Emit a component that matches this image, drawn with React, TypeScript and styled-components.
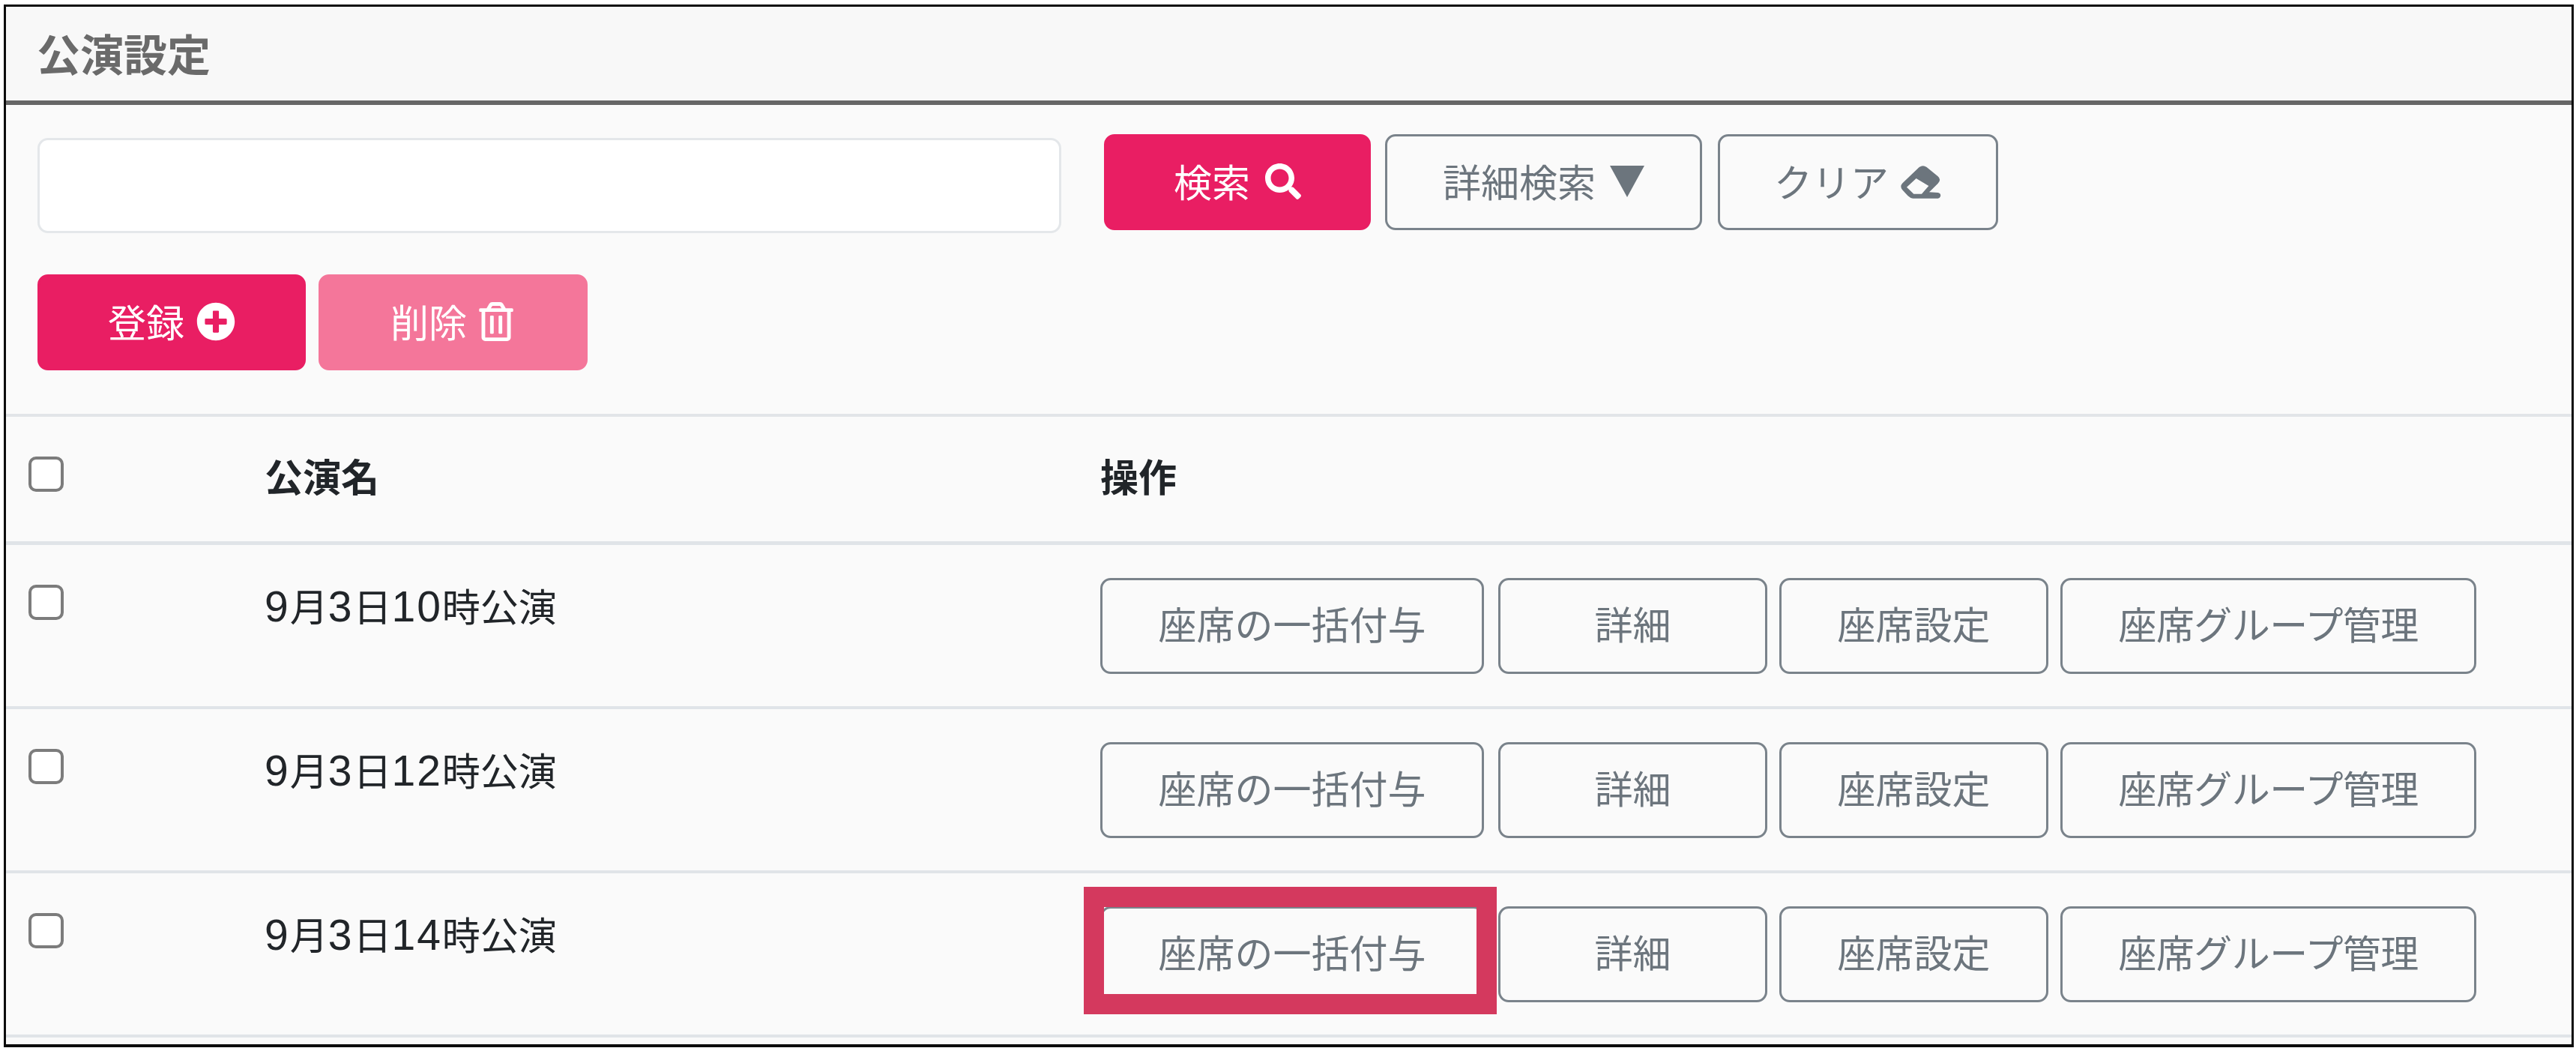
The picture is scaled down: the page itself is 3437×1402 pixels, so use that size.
import React from "react";
import styled, { createGlobalStyle } from "styled-components";
import { FaSearch, FaPlusCircle, FaRegTrashAlt } from "react-icons/fa";

const Global = createGlobalStyle`
  html, body { margin: 0; padding: 0; background: #fff; }
  body { font-family: "Noto Sans CJK JP", "Liberation Sans", sans-serif; }
  * { box-sizing: border-box; }
`;

const Frame = styled.div`
  width: 3429px;
  height: 1391px;
  margin: 6px 0 0 5px;
  border: 3px solid #0c0c0c;
  border-bottom-width: 4px;
  background: #fafafa;
  overflow: hidden;
`;

const Header = styled.header`
  height: 131px;
  padding: 0 0 4px 41px;
  display: flex;
  align-items: center;
  background: #f8f8f8;
  border-bottom: 6px solid #666;
`;

const Title = styled.h1`
  margin: 0;
  font-size: 58px;
  font-weight: 700;
  color: #6a6a6a;
  line-height: 1;
`;

const Toolbar = styled.div`
  padding: 39px 0 0 42px;
  display: flex;
  flex-direction: column;
  gap: 59px;
`;

const ToolRow = styled.div`
  display: flex;
  align-items: flex-start;
  height: 128px;
`;

const SearchInput = styled.input`
  width: 1366px;
  height: 127px;
  margin: 5px 57px 0 0;
  background: #fff;
  border: 3px solid #e4e7ea;
  border-radius: 14px;
`;

const Button = styled.button<{ $variant?: "primary" | "disabled" | "outline"; $gap?: number; $tight?: boolean }>`
  display: inline-flex;
  align-items: center;
  justify-content: center;
  gap: ${(p) => p.$gap ?? 16}px;
  height: 128px;
  min-width: 359px;
  padding: 0 74px 3px;
  font-family: inherit;
  font-size: 51px;
  font-weight: 400;
  line-height: 1;
  letter-spacing: ${(p) => (p.$tight ? "-0.6px" : "0")};
  border-radius: 14px;
  border: 3px solid
    ${(p) => (p.$variant === "primary" ? "#e91e63" : p.$variant === "disabled" ? "#f4769a" : "#7a838b")};
  background: ${(p) => (p.$variant === "primary" ? "#e91e63" : p.$variant === "disabled" ? "#f4769a" : "transparent")};
  color: ${(p) => (p.$variant === "primary" || p.$variant === "disabled" ? "#fff" : "#6c757d")};
  white-space: nowrap;
  flex: none;
`;

const SearchButton = styled(Button)`
  min-width: 356px;
  margin-right: 19px;
`;

const DetailButton = styled(Button)`
  margin-right: 21px;
`;

const ClearButton = styled(Button)`
  padding: 0 72px 3px;
`;

const RegisterButton = styled(Button)`
  min-width: 358px;
  margin-right: 17px;
`;

const ActionButton = styled(Button)`
  padding: 0 74.5px 8px;
`;

const Table = styled.div`
  margin-top: 58px;
  border-top: 4px solid #e2e5e8;
`;

const Row = styled.div<{ $head?: boolean }>`
  display: grid;
  grid-template-columns: 315px 1115px 1fr;
  padding-left: 30px;
  height: ${(p) => (p.$head ? 171 : 219)}px;
  border-bottom: ${(p) => (p.$head ? 5 : 4)}px solid #e0e4e8;
  align-items: start;
`;

const Check = styled.span`
  display: block;
  width: 47px;
  height: 47px;
  margin-top: 53px;
  background: #fff;
  border: 4px solid #7c7c7c;
  border-radius: 10px;
`;

const HeadCell = styled.div`
  font-size: 51px;
  font-weight: 700;
  line-height: 75px;
  margin-top: 41px;
  color: #212529;
`;

const NameCell = styled.div`
  font-size: 51px;
  line-height: 75px;
  margin-top: 43px;
  color: #212529;
`;

const Digits = styled.span`
  font-family: "Liberation Sans", sans-serif;
  font-size: 57px;
  letter-spacing: 2px;
`;

const Actions = styled.div`
  margin-top: 44px;
  display: flex;
  gap: 16px;
`;

const ActionWrap = styled.div`
  position: relative;
  margin-right: 3px;
`;

const Highlight = styled.div`
  position: absolute;
  top: -26px;
  left: -22px;
  right: -17px;
  bottom: -16px;
  border: 27px solid #d4395e;
  pointer-events: none;
`;

const DownTriangle = () => (
  <svg width="46" height="42" viewBox="0 0 46 42" aria-hidden="true">
    <polygon points="0,0 46,0 23,42" fill="#6c757d" />
  </svg>
);

const EraserIcon = () => (
  <svg width="57" height="48" viewBox="50 40 171 144" aria-hidden="true">
    <path
      fillRule="evenodd"
      fill="#6c757d"
      d="M130 55 Q145 45 160 55 L205 92 Q220 105 205 120 L170 155 L205 157 Q218 160 215 172 Q212 180 205 180 L105 180 Q95 180 85 170 L62 145 Q52 132 62 120 Z M118 100 L80 135 L108 162 L140 162 L168 130 Z"
    />
  </svg>
);

const rows = ["9月3日10時公演", "9月3日12時公演", "9月3日14時公演"];

const withDigits = (text: string) =>
  text.split(/(\d+)/).map((part, i) => (/^\d+$/.test(part) ? <Digits key={i}>{part}</Digits> : part));

export default function App() {
  return (
    <>
      <Global />
      <Frame>
        <Header>
          <Title>公演設定</Title>
        </Header>
        <Toolbar>
          <ToolRow>
            <SearchInput />
            <SearchButton $variant="primary" $gap={20}>
              検索 <FaSearch size={48} />
            </SearchButton>
            <DetailButton $variant="outline" $gap={19}>
              詳細検索
              <DownTriangle />
            </DetailButton>
            <ClearButton $variant="outline" $gap={14}>
              クリア <EraserIcon />
            </ClearButton>
          </ToolRow>
          <ToolRow>
            <RegisterButton $variant="primary">
              登録 <FaPlusCircle size={52} />
            </RegisterButton>
            <Button $variant="disabled" $gap={13}>
              削除 <FaRegTrashAlt size={52} />
            </Button>
          </ToolRow>
        </Toolbar>
        <Table>
          <Row $head>
            <Check />
            <HeadCell>公演名</HeadCell>
            <HeadCell>操作</HeadCell>
          </Row>
          {rows.map((name, i) => (
            <Row key={name}>
              <Check />
              <NameCell>{withDigits(name)}</NameCell>
              <Actions>
                <ActionWrap>
                  <ActionButton $variant="outline">座席の一括付与</ActionButton>
                  {i === 2 && <Highlight />}
                </ActionWrap>
                <ActionButton $variant="outline">詳細</ActionButton>
                <ActionButton $variant="outline">座席設定</ActionButton>
                <ActionButton $variant="outline" $tight>
                  座席グループ管理
                </ActionButton>
              </Actions>
            </Row>
          ))}
        </Table>
      </Frame>
    </>
  );
}
